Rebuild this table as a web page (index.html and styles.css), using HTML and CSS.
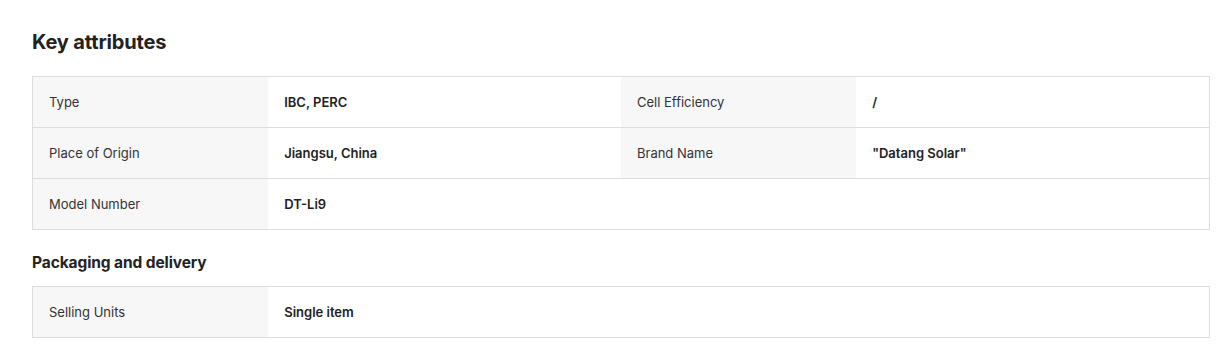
FILE: index.html
```html
<!DOCTYPE html>
<html lang="en">
<head>
<meta charset="utf-8">
<title>Key attributes</title>
<link rel="stylesheet" href="styles.css">
</head>
<body>
<div class="page">
  <h2 class="title">Key attributes</h2>
  <div class="attr-table">
    <div class="row">
      <div class="label">Type</div>
      <div class="value">IBC, PERC</div>
      <div class="label">Cell Efficiency</div>
      <div class="value">/</div>
    </div>
    <div class="row">
      <div class="label">Place of Origin</div>
      <div class="value">Jiangsu, China</div>
      <div class="label">Brand Name</div>
      <div class="value">"Datang Solar"</div>
    </div>
    <div class="row">
      <div class="label">Model Number</div>
      <div class="value">DT-Li9</div>
      <div class="empty"></div>
    </div>
  </div>
  <h3 class="subtitle">Packaging and delivery</h3>
  <div class="attr-table">
    <div class="row">
      <div class="label">Selling Units</div>
      <div class="value">Single item</div>
      <div class="empty"></div>
    </div>
  </div>
</div>
</body>
</html>
```
FILE: styles.css
```css
* { box-sizing: border-box; }
html, body { margin: 0; padding: 0; background: #fff; }
body {
  font-family: Inter, "Noto Sans", "Liberation Sans", sans-serif;
  color: #222;
}
.page {
  padding: 28px 7px 0 32px;
}
.title {
  margin: 0 0 20px;
  font-size: 20px;
  line-height: 28px;
  font-weight: 700;
  letter-spacing: -0.15px;
  color: #222;
}
.subtitle {
  margin: 22px 0 12px;
  font-size: 15.5px;
  line-height: 22px;
  font-weight: 700;
  letter-spacing: -0.1px;
  color: #222;
}
.attr-table {
  border: 1px solid #dddddd;
  border-bottom: none;
}
.row {
  display: grid;
  grid-template-columns: 20% 30% 20% 30%;
  border-bottom: 1px solid #dddddd;
  height: 51px;
}
.label, .value {
  display: flex;
  align-items: center;
  font-size: 13px;
  line-height: 18px;
}
.label {
  background: #f7f7f7;
  padding-left: 16px;
  color: #333;
}
.value {
  padding-left: 16px;
  font-weight: 600;
  color: #222;
}
.empty {
  grid-column: span 2;
}
```
